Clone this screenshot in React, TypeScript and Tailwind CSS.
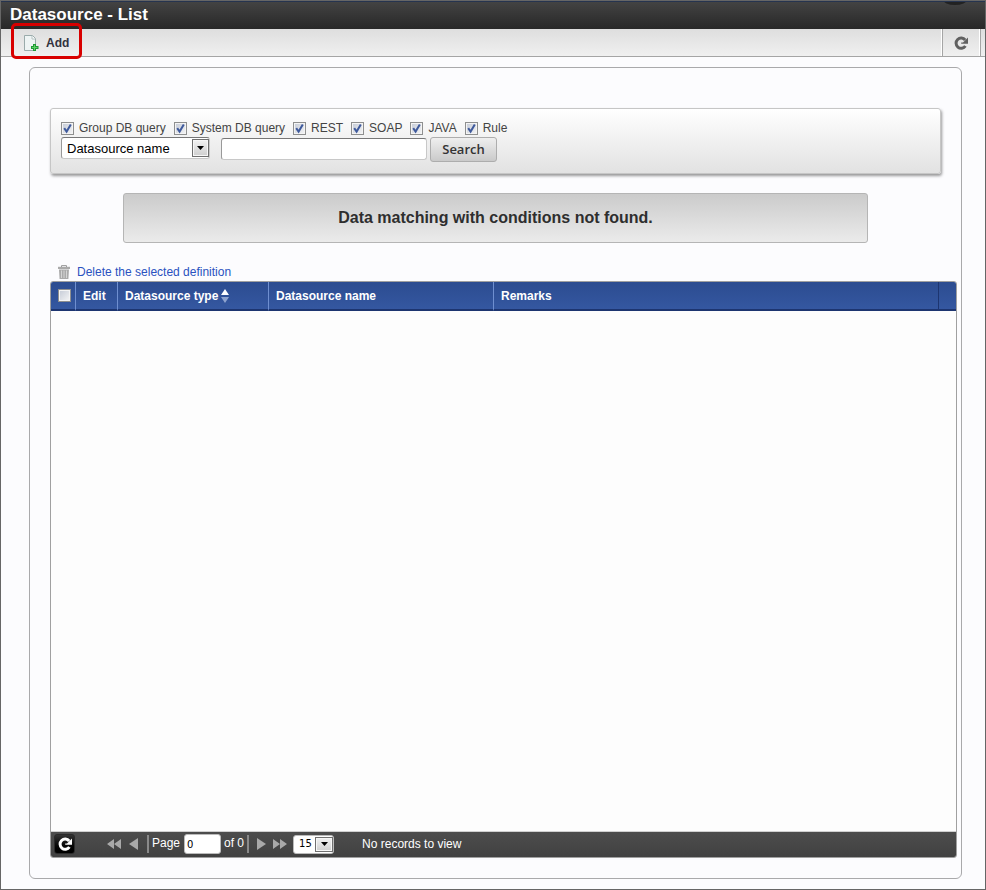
import { useState } from "react";
import type { InputHTMLAttributes, ReactNode } from "react";

const sources = ["Group DB query", "System DB query", "REST", "SOAP", "JAVA", "Rule"];

function CheckBox(props: InputHTMLAttributes<HTMLInputElement>) {
  return (
    <span className="relative block h-[13px] w-[13px] shrink-0">
      <input
        type="checkbox"
        className="peer block h-[13px] w-[13px] appearance-none border border-[#8e8f8f] bg-linear-to-br from-[#c4cad6] to-[#f6f6f6] shadow-[inset_0_0_0_1px_#f4f4f4]"
        {...props}
      />
      <svg
        viewBox="0 0 13 13"
        className="pointer-events-none absolute inset-0 hidden h-[13px] w-[13px] peer-checked:block"
        fill="none"
        stroke="#3f5a9c"
        strokeWidth="2"
      >
        <path d="M3.2 6.2 L5.6 9.6 L9.8 2.6" />
      </svg>
    </span>
  );
}

function ReloadIcon({ className }: { className: string }) {
  return (
    <svg viewBox="0 0 14 14" className={className} aria-hidden="true">
      <path d="M11.4 10 A5.1 5.1 0 1 1 11.2 4" fill="none" stroke="currentColor" strokeWidth="3" />
      <path d="M14 1.4 V7.8 H7.2 V6.4 H9 L11 4.4 Z" fill="currentColor" />
    </svg>
  );
}

function DropArrow({ className }: { className: string }) {
  return (
    <span
      className={`pointer-events-none absolute flex items-center justify-center border border-[#707070] bg-linear-to-b from-[#f2f2f2] to-[#cfcfcf] shadow-[inset_0_0_0_1px_#f7f7f7] ${className}`}
    >
      <svg viewBox="0 0 7 4" className="h-[4px] w-[7px]" aria-hidden="true">
        <path d="M0 0 H7 L3.5 4 Z" fill="#000" />
      </svg>
    </span>
  );
}

function PagerButton({ label, className, children }: { label: string; className: string; children: ReactNode }) {
  return (
    <button type="button" aria-label={label} className={`shrink-0 text-[#a9a9a9] ${className}`}>
      {children}
    </button>
  );
}

export default function App() {
  const [checked, setChecked] = useState<Record<string, boolean>>(
    Object.fromEntries(sources.map((s) => [s, true])),
  );
  const [keyword, setKeyword] = useState("");
  const [page, setPage] = useState("0");

  return (
    <div className="flex min-h-screen flex-col border border-[#666] bg-[#fcfcfe] font-['Liberation_Sans',Arial,sans-serif] text-xs text-[#333]">
      <header className="relative flex h-7 items-center overflow-hidden border-t border-[#26344f] bg-linear-to-b from-[#434343] to-[#282828] px-[9px]">
        <h1 className="text-[17px] font-bold text-white">Datasource - List</h1>
        <span className="absolute -top-2 right-[18px] h-[11px] w-6 rounded-[50%] bg-[#222]" />
      </header>

      <div className="flex h-7 items-stretch justify-between border-b border-[#a5a5a5] bg-linear-to-b from-[#dedede] to-[#f0f0f0]">
        <div className="relative flex pl-[22px]">
          <button type="button" className="flex items-center gap-[7px] font-bold text-[#32323e]">
            <svg viewBox="0 0 16 16" className="h-4 w-4" aria-hidden="true">
              <path d="M1.5 .5 H9.5 L12.5 3.5 V15.5 H1.5 Z" fill="#eef4f4" stroke="#9aabab" />
              <path d="M9 .8 V4 H12.3" fill="#fff" stroke="#b4c2c2" />
              <path d="M10 9 H13 V11 H15.5 V14 H13 V16 H10 V14 H8 V11 H10 Z" fill="#1f9a35" />
              <path d="M11 10 H12 V12 H14.5 V13 H12 V15 H11 V13 H9 V12 H11 Z" fill="#5fd068" />
            </svg>
            Add
          </button>
          <span className="pointer-events-none absolute -top-[6px] left-[10px] h-9 w-[71px] rounded-[5px] border-3 border-[#d80000]" />
        </div>
        <div className="flex">
          <button
            type="button"
            aria-label="Reload"
            className="flex w-[39px] items-center justify-center border-x border-[#a5a5a5] pr-[2px] text-[#606060] shadow-[-1px_0_0_#fff,inset_-1px_0_0_#fff]"
          >
            <ReloadIcon className="h-[14px] w-[14px]" />
          </button>
          <span className="w-1" />
        </div>
      </div>

      <main className="mt-[10px] mr-[23px] mb-[10px] ml-7 flex flex-1 flex-col rounded-md border border-[#a9a9ab] pt-10 pr-1 pb-5 pl-5">
        <form
          className="mr-4 rounded-[3px] border border-[#c6c6c6] bg-linear-to-b from-white to-[#e2e2e2] px-[10px] py-[11px] shadow-[1px_2px_3px_rgba(0,0,0,0.4)]"
          onSubmit={(e) => e.preventDefault()}
        >
          <div className="flex h-4 flex-wrap items-center gap-x-2">
            {sources.map((s) => (
              <label key={s} className="flex items-center gap-[5px] whitespace-nowrap text-[#444]">
                <CheckBox checked={checked[s]} onChange={() => setChecked({ ...checked, [s]: !checked[s] })} />
                {s}
              </label>
            ))}
          </div>
          <div className="mt-px flex items-start">
            <span className="relative mr-[11px]">
              <select
                aria-label="Search field"
                className="block h-[22px] w-[149px] appearance-none rounded-[3px] border border-[#c8c8c8] border-t-[#777] border-l-[#999] bg-white pt-px pr-5 pl-[5px] text-[13px] text-black"
              >
                <option>Datasource name</option>
                <option>Datasource type</option>
              </select>
              <DropArrow className="top-[2px] right-px h-[18px] w-[17px]" />
            </span>
            <input
              type="text"
              aria-label="Search keyword"
              value={keyword}
              onChange={(e) => setKeyword(e.target.value)}
              className="mt-px mr-[3px] h-[22px] w-[206px] rounded-[3px] border border-[#c8c8c8] border-t-[#777] border-l-[#999] bg-white px-1 text-[13px] text-black"
            />
            <button
              type="submit"
              className="h-[25px] w-[67px] rounded-[3px] border border-[#adadad] bg-linear-to-b from-[#efefef] to-[#cacaca] font-['Open_Sans','Liberation_Sans',sans-serif] text-[13px] font-semibold text-[#333]"
            >
              Search
            </button>
          </div>
        </form>

        <p className="mt-[19px] mr-[89px] ml-[73px] flex h-[50px] items-center justify-center rounded-[3px] border border-[#b5b5b5] bg-linear-to-b from-[#cbcbcb] to-[#ebebeb] text-base font-bold text-[#2e2e2e]">
          Data matching with conditions not found.
        </p>

        <div className="mt-5 flex h-[18px] pl-[7px]">
          <a href="#delete" className="flex items-center gap-[6px] text-[#2a52c0]">
            <svg viewBox="0 0 14 14" className="h-[14px] w-[14px]" aria-hidden="true">
              <path d="M4.5 2 V.6 H9.5 V2" fill="none" stroke="#999" />
              <path d="M1 1.8 H13 V4 H1 Z" fill="#aaa" />
              <path d="M2 4.6 H12 L11.4 14 H2.6 Z" fill="#aaa" />
              <path d="M4.5 5.5 V13 M7 5.5 V13 M9.5 5.5 V13" stroke="#d4d4d4" />
            </svg>
            Delete the selected definition
          </a>
        </div>

        <section className="flex flex-1 flex-col overflow-hidden rounded-[3px] border border-[#a0a0a0] bg-[#fdfdfd]">
          <table className="w-full table-fixed border-separate border-spacing-0 bg-linear-to-b from-[#2c4c90] to-[#3558a2] text-left text-white">
            <colgroup>
              <col className="w-[25px]" />
              <col className="w-[42px]" />
              <col className="w-[151px]" />
              <col className="w-[225px]" />
              <col />
              <col className="w-[17px]" />
            </colgroup>
            <thead>
              <tr className="h-[29px] *:border-b-2 *:border-b-[#1d3570]">
                <th className="border-r border-r-[#6f8fd0] pl-[7px]">
                  <CheckBox aria-label="Select all" />
                </th>
                <th className="border-r border-r-[#6f8fd0] pl-[7px]">Edit</th>
                <th className="border-r border-r-[#6f8fd0] pl-[7px]" aria-sort="ascending">
                  <button type="button" className="flex items-center gap-[3px] font-bold">
                    Datasource type
                    <svg viewBox="0 0 8 14" className="h-[14px] w-2" aria-hidden="true">
                      <path d="M0 6 L4 0 L8 6 Z" fill="#fff" />
                      <path d="M0 8 H8 L4 14 Z" fill="#8ea3cf" />
                    </svg>
                  </button>
                </th>
                <th className="border-r border-r-[#6f8fd0] pl-[7px]">Datasource name</th>
                <th className="border-r border-r-[#1d3570] pl-[7px]">Remarks</th>
                <td />
              </tr>
            </thead>
          </table>

          <div className="flex-1" />

          <footer className="flex h-[26px] items-center border-t border-[#d0d0d0] bg-linear-to-b from-[#4d4d4d] to-[#414141] pb-px pl-[3px] text-white">
            <button
              type="button"
              aria-label="Reload list"
              className="mr-8 flex h-5 w-[21px] shrink-0 items-center justify-center rounded-[3px] border border-[#2a2a2a] bg-linear-to-b from-[#333] to-black"
            >
              <ReloadIcon className="h-[14px] w-[14px]" />
            </button>
            <PagerButton label="First page" className="mr-2">
              <svg viewBox="0 0 14 10" className="h-[10px] w-[14px]">
                <path d="M7 0 V10 L0 5 Z M14 0 V10 L7 5 Z" fill="currentColor" />
              </svg>
            </PagerButton>
            <PagerButton label="Previous page" className="mr-[9px]">
              <svg viewBox="0 0 9 12" className="h-3 w-[9px]">
                <path d="M9 0 V12 L0 6 Z" fill="currentColor" />
              </svg>
            </PagerButton>
            <span className="mr-[3px] h-[18px] w-[2px] bg-[#8a8a8a]" />
            <label htmlFor="page" className="mr-1 pb-[2px]">
              Page
            </label>
            <input
              id="page"
              type="text"
              value={page}
              onChange={(e) => setPage(e.target.value)}
              className="mr-[3px] h-5 w-[37px] rounded-[3px] border border-[#bbb] bg-white px-[2px] font-['DejaVu_Sans',sans-serif] text-[10px] text-black"
            />
            <span className="mr-[3px] pb-[2px]">of 0</span>
            <span className="mr-2 h-[18px] w-[2px] bg-[#8a8a8a]" />
            <PagerButton label="Next page" className="mr-[7px]">
              <svg viewBox="0 0 9 12" className="h-3 w-[9px]">
                <path d="M0 0 V12 L9 6 Z" fill="currentColor" />
              </svg>
            </PagerButton>
            <PagerButton label="Last page" className="mr-[6px]">
              <svg viewBox="0 0 14 10" className="h-[10px] w-[14px]">
                <path d="M0 0 V10 L7 5 Z M7 0 V10 L14 5 Z" fill="currentColor" />
              </svg>
            </PagerButton>
            <span className="relative mr-7">
              <select
                aria-label="Rows per page"
                className="block h-[19px] w-[41px] appearance-none rounded-[3px] border border-[#bbb] bg-white pl-[5px] font-['DejaVu_Sans',sans-serif] text-[10px] text-black"
              >
                <option>15</option>
                <option>30</option>
                <option>50</option>
              </select>
              <DropArrow className="top-[2px] right-px h-[15px] w-[18px]" />
            </span>
            <span>No records to view</span>
          </footer>
        </section>
      </main>
    </div>
  );
}
